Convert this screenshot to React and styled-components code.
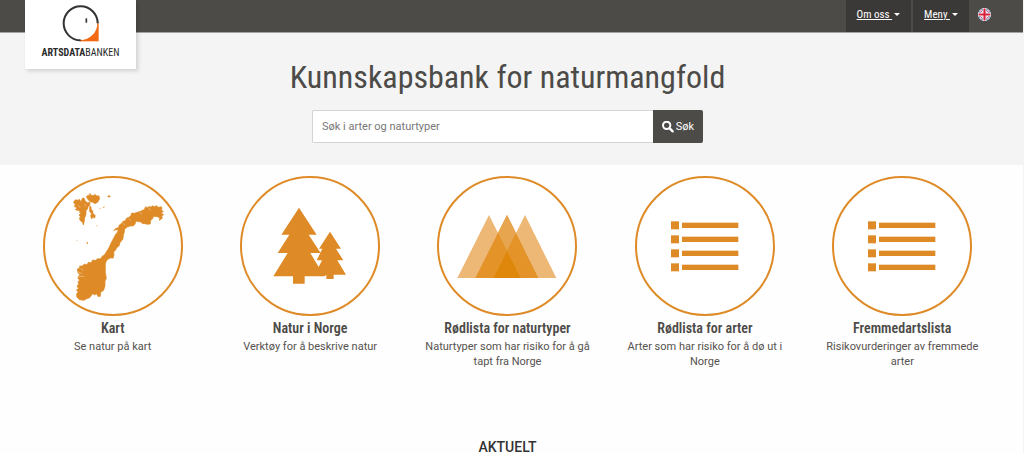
import React, { useState } from 'react'
import styled, { createGlobalStyle } from 'styled-components'

const GlobalStyle = createGlobalStyle`
  * {
    box-sizing: border-box;
  }
  body {
    margin: 0;
    background: #fefefe;
    color: #55524f;
    font-family: Roboto, 'Liberation Sans', sans-serif;
    font-size: 11px;
  }
`

const condensed = `'Roboto Condensed', Roboto, 'Liberation Sans', sans-serif`

const Page = styled.div`
  border-right: 1px solid #f4f4f4;
`

const TopBar = styled.header`
  display: flex;
  justify-content: space-between;
  align-items: flex-start;
  height: 33px;
  padding: 0 32px 0 25px;
  background: #4d4b48;
  border-bottom: 1px solid #a3a2a0;
`

const Logo = styled.a`
  display: flex;
  flex-direction: column;
  align-items: center;
  width: 111px;
  height: 69px;
  padding-top: 5px;
  background: #fff;
  box-shadow: 2px 2px 4px rgba(0, 0, 0, 0.15);
  color: #2c2c2c;
  text-decoration: none;
  z-index: 1;

  svg {
    width: 38px;
    height: 38px;
  }
`

const LogoText = styled.span`
  font-family: ${condensed};
  font-size: 10px;
  font-weight: 700;
  line-height: 20px;

  span {
    font-weight: 400;
  }
`

const Nav = styled.nav`
  display: flex;
  align-items: center;
  gap: 2px;
  height: 32px;
`

const NavButton = styled.button`
  display: flex;
  align-items: center;
  gap: 2px;
  height: 32px;
  padding: 0 11px 4px;
  border: none;
  background: #3b3937;
  color: #fff;
  font-family: ${condensed};
  font-size: 11px;
  text-decoration: underline;
  white-space: pre;

  &::after {
    content: '';
    border: 3px solid transparent;
    border-top-color: #fff;
    border-bottom: 0;
  }
`

const Language = styled.a`
  display: flex;
  margin: 0 0 4px 7px;
`

const Hero = styled.section`
  display: flex;
  flex-direction: column;
  align-items: center;
  padding: 24px 8px 22px 0;
  background: #f4f4f4;

  h1 {
    margin: 0 0 13px;
    color: #4d4b48;
    font-family: ${condensed};
    font-size: 32px;
    font-weight: 400;
    line-height: 40px;
  }
`

const SearchForm = styled.form`
  display: flex;
  width: 100%;
  max-width: 391px;
  height: 33px;

  input {
    flex: 1;
    min-width: 0;
    padding: 0 9px;
    border: 1px solid #d4d4d4;
    border-right: 0;
    border-radius: 2px 0 0 2px;
    background: #fff;
    font-family: inherit;
    font-size: 11px;
  }
  input::placeholder {
    color: #777;
  }
  button {
    display: flex;
    align-items: center;
    justify-content: center;
    gap: 2px;
    width: 50px;
    padding: 0;
    border: none;
    border-radius: 0 2px 2px 0;
    background: #4d4b48;
    color: #fff;
    font-family: inherit;
    font-size: 11px;
  }
`

const Services = styled.main`
  display: grid;
  grid-template-columns: repeat(5, 1fr);
  padding: 11px 22px 0 14px;
`

const Card = styled.a`
  display: flex;
  flex-direction: column;
  align-items: center;
  padding: 0 14px;
  color: inherit;
  text-align: center;
  text-decoration: none;

  svg {
    width: 140px;
    height: 140px;
  }
  h2 {
    margin: 3px 0 2px;
    color: #4d4b48;
    font-family: ${condensed};
    font-size: 14px;
    font-weight: 600;
    line-height: 18px;
    white-space: nowrap;
  }
  p {
    margin: 0;
    font-size: 11px;
    line-height: 15px;
  }
`

const NewsTitle = styled.h2`
  margin: 70px 8px 0 0;
  color: #333;
  font-size: 14px;
  font-weight: 500;
  line-height: 16px;
  text-align: center;
`

const orange = '#de8b27'

function Ring({ box, cx, children }) {
  return (
    <svg viewBox={box} fill={orange} aria-hidden="true">
      <circle cx={cx} cy="228" r="207" fill="#fff" stroke={orange} strokeWidth="6" />
      {children}
    </svg>
  )
}

function MapIcon() {
  return (
    <Ring box="24 18 420 420" cx="234">
      <g stroke={orange} strokeWidth="2" strokeLinejoin="round">
        <path d="M127 297 L134 294 L134 288 L142 288 L148 282 L156 284 L160 277 L168 278 L173 270 L182 271 L188 266 L197 266 L202 258 L208 255 L214 245 L219 238 L224 229 L228 219 L233 210 L237 202 L241 194 L247 187 L250 179 L241 180 L236 182 L243 175 L250 173 L253 165 L260 160 L264 154 L271 152 L274 145 L282 142 L288 136 L290 129 L298 130 L307 127 L316 124 L323 121 L329 117 L332 110 L338 113 L343 109 L348 112 L352 107 L358 110 L364 107 L370 112 L379 110 L381 115 L379 120 L385 124 L379 130 L386 134 L380 138 L382 145 L373 151 L374 143 L366 140 L356 139 L353 146 L347 151 L346 162 L336 163 L330 161 L323 161 L317 156 L311 155 L303 153 L300 163 L294 168 L286 168 L277 171 L269 177 L268 187 L265 195 L264 207 L255 218 L252 228 L245 233 L242 240 L236 246 L237 254 L235 264 L225 264 L215 271 L211 282 L211 307 L214 325 L210 334 L210 348 L206 361 L197 367 L196 379 L190 380 L184 371 L179 375 L173 371 L164 383 L153 387 L147 391 L133 389 L125 380 L125 371 L130 365 L124 361 L130 355 L126 348 L131 342 L129 335 L134 330 L129 326 L130 320 L134 314 L128 307 Z" />
        <path d="M117 94 L122 89 L128 91 L133 88 L138 95 L142 85 L147 84 L151 94 L158 98 L164 96 L165 105 L160 109 L157 118 L153 122 L153 134 L149 143 L148 153 L145 165 L142 156 L136 152 L133 146 L136 140 L132 135 L137 130 L133 126 L136 123 L121 119 L126 114 L118 109 L121 103 L116 99 Z" />
        <path d="M154 80 L160 75 L164 79 L164 70 L169 76 L177 77 L179 73 L185 77 L192 78 L194 86 L188 97 L180 101 L174 97 L167 96 L160 90 Z" />
        <path d="M164 110 L167 108 L169 118 L173 122 L174 130 L181 137 L179 144 L173 142 L170 147 L167 138 L169 130 L164 125 Z" />
      </g>
      <path d="M217 79 L222 76 L227 78 L225 82 L219 82 Z M202 112 L210 109 L207 113 Z M192 115 L197 114 L195 117 Z M155 217 L158 215 L159 221 L155 221 Z M124 209 L128 211 L125 212 Z M184 165 L188 168 L185 169 Z" />
      <path
        d="M137 296 L146 301 M127 305 L142 311 M131 320 L148 319 M128 104 L136 114 M152 101 L149 110 M263 160 L270 165 M282 146 L287 152 M316 127 L320 134 M342 114 L346 121"
        fill="none"
        stroke="#fff"
        strokeWidth="1"
      />
    </Ring>
  )
}

function TreesIcon() {
  return (
    <Ring box="16 18 420 420" cx="226">
      <path d="M193 113 L246 194 L222 194 L258 249 L227 249 L252 291 L262 271 L246 271 L263 236 L253 236 L286 185 L319 236 L304 236 L326 271 L308 271 L334 314 L297 314 L297 327 L275 327 L275 314 L270 319 L210 319 L210 341 L175 341 L175 319 L116 319 L159 249 L129 249 L164 194 L140 194 Z" />
    </Ring>
  )
}

function TrianglesIcon() {
  return (
    <Ring box="8 18 420 420" cx="218">
      <path d="M164 135 L259 324 L69 324 Z" fill="#edb875" />
      <path d="M272 135 L366 324 L178 324 Z" fill="#edb875" />
      <path d="M218 135 L312 324 L123 324 Z" fill="#e39328" />
      <path d="M218 135 L245 189 L218 243 L191 189 Z" fill="#e8a54f" />
      <path d="M191 189 L218 243 L245 189 L245 243 L191 243 Z" fill="#e39328" />
      <path d="M218 243 L259 324 L178 324 Z" fill="#df870b" />
    </Ring>
  )
}

function ListIcon() {
  return (
    <Ring box="15 18 420 420" cx="225">
      {[166, 208, 250, 292].map((y) => (
        <React.Fragment key={y}>
          <rect x="123" y={y - 12} width="24" height="24" />
          <rect x="156" y={y - 8} width="169" height="16" />
        </React.Fragment>
      ))}
    </Ring>
  )
}

function LogoMark() {
  return (
    <svg viewBox="0 0 114 114" aria-hidden="true">
      <path d="M53 52 H110 V109 H53 Z" fill="#f26a16" />
      <circle cx="56" cy="55" r="50" fill="#fff" />
      <path d="M107 55 A51 51 0 1 0 56 106" fill="none" stroke="#333" strokeWidth="6" />
      <path d="M73 40 V53" stroke="#333" strokeWidth="5" />
    </svg>
  )
}

function Flag() {
  return (
    <svg width="13" height="13" viewBox="0 0 36 36" aria-hidden="true">
      <clipPath id="round">
        <circle cx="18" cy="18" r="18" />
      </clipPath>
      <g clipPath="url(#round)">
        <path d="M0 0 H36 V36 H0 Z" fill="#29488f" />
        <path d="M0 0 L36 36 M36 0 L0 36" stroke="#fff" strokeWidth="5" />
        <path d="M0 0 L36 36 M36 0 L0 36" stroke="#d8213b" strokeWidth="2" />
        <path d="M18 0 V36 M0 18 H36" stroke="#fff" strokeWidth="11" />
        <path d="M18 0 V36 M0 18 H36" stroke="#d8213b" strokeWidth="6" />
      </g>
      <circle cx="18" cy="18" r="17" fill="none" stroke="#eee" strokeWidth="2" />
    </svg>
  )
}

function SearchIcon() {
  return (
    <svg width="12" height="12" viewBox="0 0 36 36" fill="none" stroke="#fff" aria-hidden="true">
      <circle cx="14" cy="13" r="11" strokeWidth="6" />
      <path d="M23 22 L32 31" strokeWidth="7" strokeLinecap="round" />
    </svg>
  )
}

const services = [
  { title: 'Kart', text: 'Se natur på kart', Icon: MapIcon },
  { title: 'Natur i Norge', text: 'Verktøy for å beskrive natur', Icon: TreesIcon },
  { title: 'Rødlista for naturtyper', text: 'Naturtyper som har risiko for å gå tapt fra Norge', Icon: TrianglesIcon },
  { title: 'Rødlista for arter', text: 'Arter som har risiko for å dø ut i Norge', Icon: ListIcon },
  { title: 'Fremmedartslista', text: 'Risikovurderinger av fremmede arter', Icon: ListIcon },
]

function App() {
  const [query, setQuery] = useState('')

  return (
    <Page>
      <GlobalStyle />
      <TopBar>
        <Logo href="#">
          <LogoMark />
          <LogoText>ARTSDATA<span>BANKEN</span></LogoText>
        </Logo>
        <Nav>
          <NavButton type="button">{'Om oss '}</NavButton>
          <NavButton type="button">{'Meny '}</NavButton>
          <Language href="#" aria-label="English">
            <Flag />
          </Language>
        </Nav>
      </TopBar>
      <Hero>
        <h1>Kunnskapsbank for naturmangfold</h1>
        <SearchForm onSubmit={(e) => e.preventDefault()}>
          <input
            type="text"
            aria-label="Søk i arter og naturtyper"
            placeholder="Søk i arter og naturtyper"
            value={query}
            onChange={(e) => setQuery(e.target.value)}
          />
          <button type="submit">
            <SearchIcon />
            Søk
          </button>
        </SearchForm>
      </Hero>
      <Services>
        {services.map(({ title, text, Icon }) => (
          <Card href="#" key={title}>
            <Icon />
            <h2>{title}</h2>
            <p>{text}</p>
          </Card>
        ))}
      </Services>
      <NewsTitle>AKTUELT</NewsTitle>
    </Page>
  )
}

export default App
